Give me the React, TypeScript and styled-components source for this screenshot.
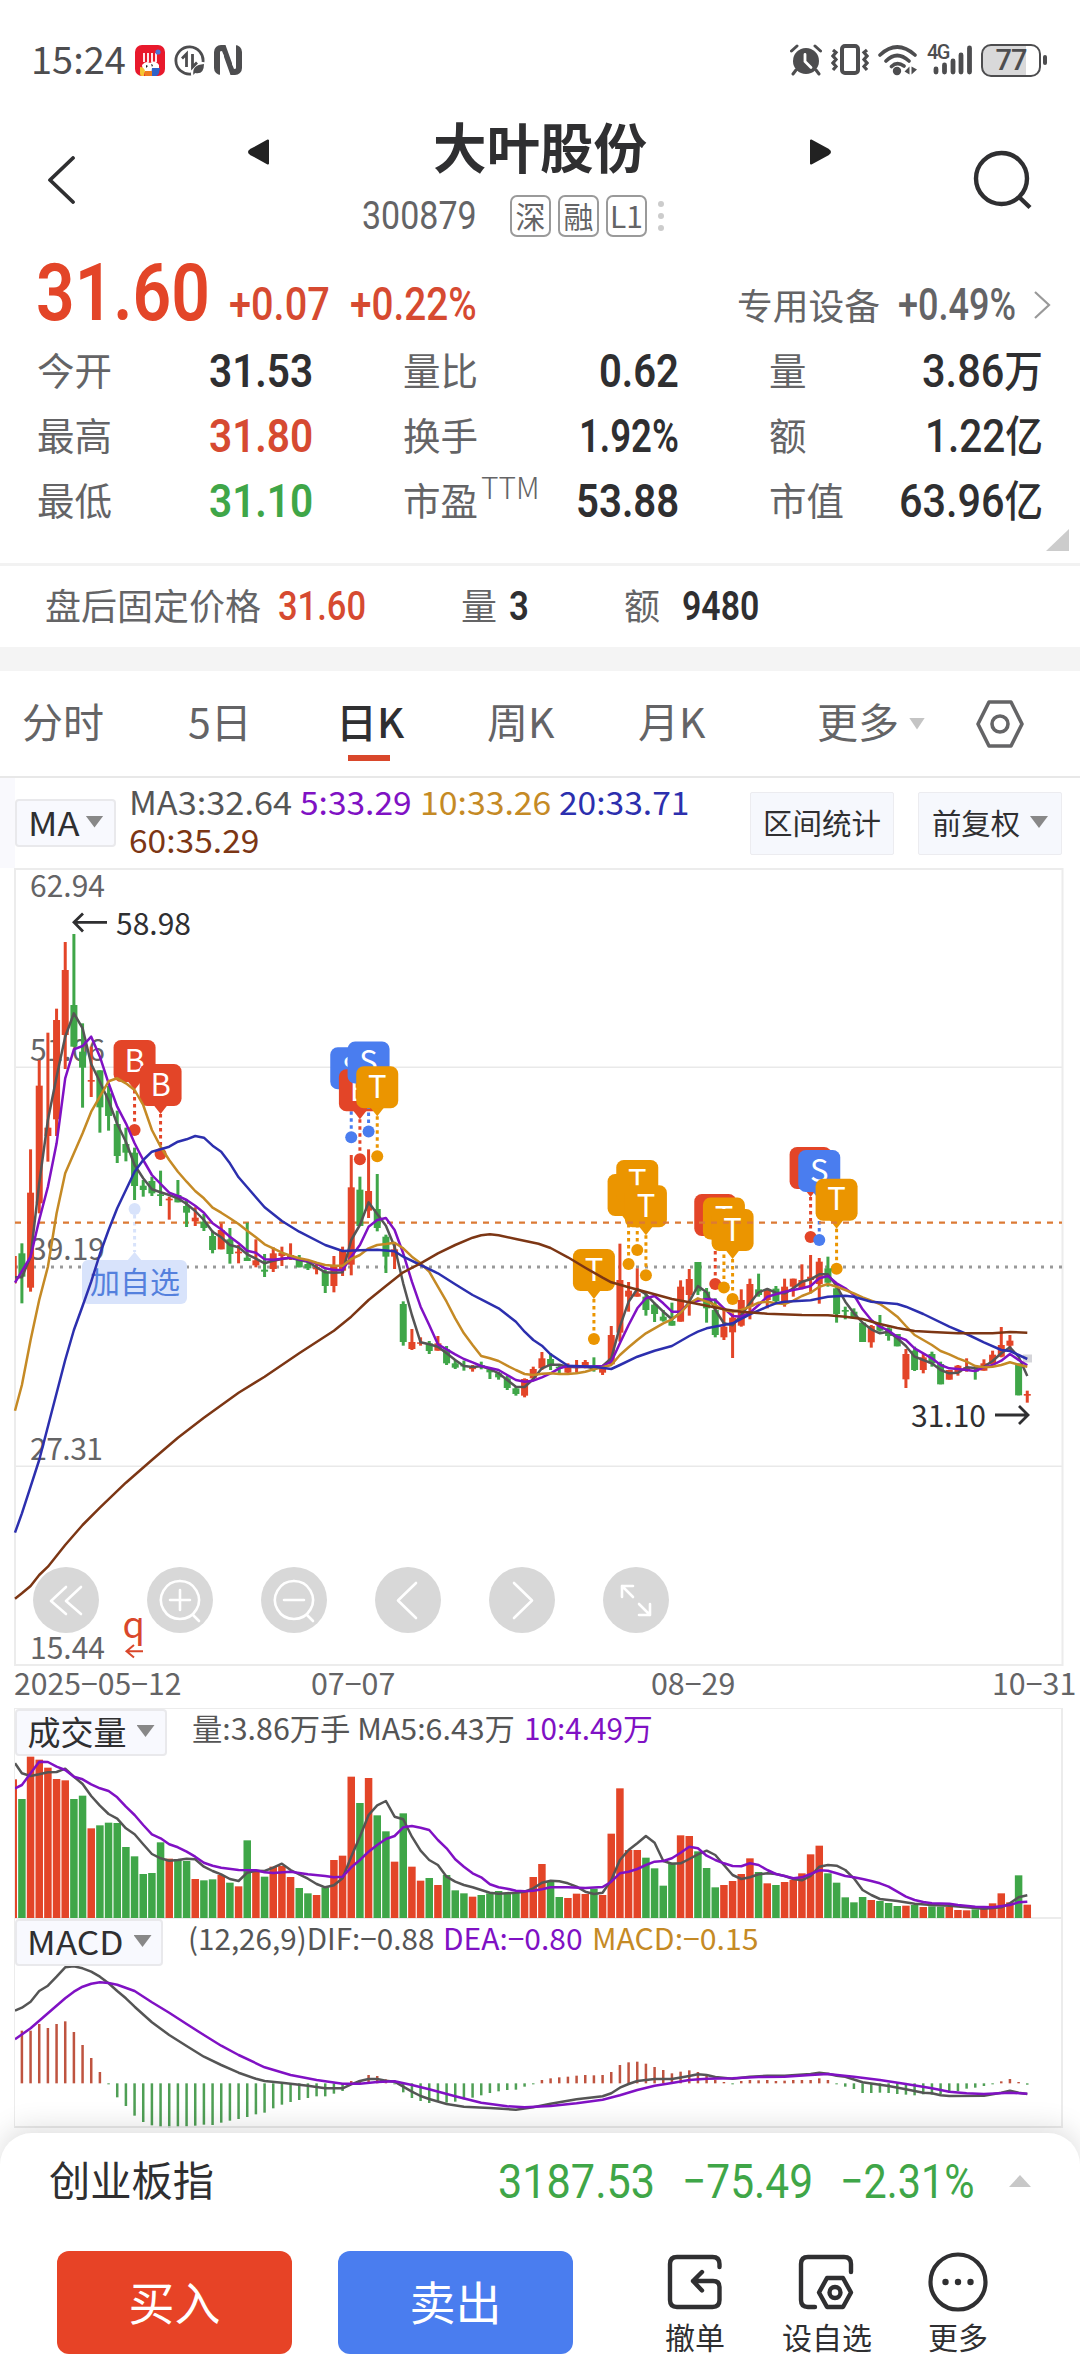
import React, { useLayoutEffect, useRef, useState } from "react";
import styled, { createGlobalStyle, css } from "styled-components";

const RED = "#e34528";
const GREEN = "#3fa648";
const BLUE = "#4a7def";
const ORANGE = "#eb9500";
const INK = "#2f2f31";
const GREY = "#646466";
const CJK = '"Noto Sans CJK SC", "Noto Sans", sans-serif';
const NUM = 'Roboto, "Noto Sans CJK SC", sans-serif';

const Global = createGlobalStyle`
  * { box-sizing: border-box; }
  body { margin: 0; background: #fff; font-family: ${CJK}; color: ${INK}; }
`;

/* ---------- fitted text ---------- */

type TextProps = { $size: number; $color?: string; $weight?: number; $num?: boolean; $lift?: number };

const FitBox = styled.span<TextProps & { $w: number }>`
  display: inline-block;
  flex: none;
  width: ${(p) => p.$w}px;
  padding-bottom: ${(p) => p.$lift || 0}px;
  font-size: ${(p) => p.$size}px;
  line-height: 1;
  text-align: left;
  color: ${(p) => p.$color || INK};
  font-weight: ${(p) => p.$weight || 400};
  font-family: ${(p) => (p.$num ? NUM : CJK)};
  white-space: nowrap;
`;

const FitInner = styled.span`
  display: inline-block;
  transform-origin: 0 50%;
`;

const Unit = styled.span`
  font-size: 0.93em;
`;

type FitProps = {
  w: number;
  size: number;
  color?: string;
  weight?: number;
  num?: boolean;
  lift?: number;
  children: React.ReactNode;
};

function Fit({ w, size, color, weight, num, lift, children }: FitProps) {
  const ref = useRef<HTMLSpanElement>(null);
  const [scale, setScale] = useState(1);
  useLayoutEffect(() => {
    if (ref.current && ref.current.offsetWidth) setScale(w / ref.current.offsetWidth);
  }, [w, size, children]);
  return (
    <FitBox $w={w} $size={size} $color={color} $weight={weight} $num={num} $lift={lift}>
      <FitInner ref={ref} style={{ transform: `scaleX(${scale})` }}>
        {children}
      </FitInner>
    </FitBox>
  );
}

/* ---------- layout ---------- */

const Page = styled.div`
  width: 1080px;
  height: 2376px;
  display: flex;
  flex-direction: column;
  overflow: hidden;
  background: #fff;
`;

const StatusBar = styled.div`
  height: 100px;
  padding: 20px 39px 0 31px;
  display: flex;
  align-items: center;
  justify-content: space-between;
`;

const Cluster = styled.div<{ $gap: number }>`
  display: flex;
  align-items: center;
  gap: ${(p) => p.$gap}px;
`;

const Header = styled.header`
  height: 150px;
  display: grid;
  grid-template-columns: 248px 22px 1fr 22px 248px;
`;

const HeaderSlot = styled.div<{ $top: number; $left?: number }>`
  padding: ${(p) => p.$top}px 0 0 ${(p) => p.$left || 0}px;
  svg { display: block; }
`;

const TitleColumn = styled.div`
  display: flex;
  flex-direction: column;
`;

const TitleLine = styled.div`
  height: 95px;
  display: flex;
  justify-content: center;
  padding-top: 19px;
`;

const CodeLine = styled.div`
  height: 42px;
  padding-left: 92px;
  display: flex;
  align-items: center;
`;

const TagGroup = styled.div`
  display: flex;
  gap: 7px;
  margin: 0 11px 0 33px;
`;

const Tag = styled.span`
  width: 41px;
  height: 42px;
  border: 2px solid #9a9a9a;
  border-radius: 7px;
  display: flex;
  align-items: center;
  justify-content: center;
  font-size: 30px;
  line-height: 36px;
  padding-bottom: 3px;
  color: ${GREY};
`;

const PriceRow = styled.div`
  height: 88px;
  padding: 4px 28px 0 36px;
  display: flex;
  align-items: baseline;
`;

const Gap = styled.span<{ $w: number }>`
  flex: none;
  width: ${(p) => p.$w}px;
`;

const Stats = styled.div`
  position: relative;
  height: 225px;
  padding: 0 37px;
  display: grid;
  grid-template-columns: 276px 276px 274px;
  grid-auto-rows: 65px;
  column-gap: 90px;
`;

const Stat = styled.div`
  display: flex;
  align-items: center;
  justify-content: space-between;
`;

const StatLabel = styled.span`
  font-size: 37.5px;
  line-height: 56px;
  color: ${GREY};
  height: 60px;
  white-space: nowrap;
`;

const Sup = styled.span`
  font-size: 30px;
  font-weight: 300;
  position: relative;
  top: -16px;
  left: 3px;
`;

const Corner = styled.span`
  position: absolute;
  right: 11px;
  bottom: 12px;
  border-left: 23px solid transparent;
  border-bottom: 22px solid #cccccc;
`;

const AfterHours = styled.div`
  height: 84px;
  border-top: 3px solid #f2f2f2;
  padding: 0 46px 0 45px;
  display: flex;
  align-items: center;
`;

const Band = styled.div`
  height: 24px;
  background: #f4f4f4;
`;

const Tabs = styled.nav`
  height: 107px;
  border-bottom: 2px solid #e8e8e8;
  padding: 0 46px 0 22px;
  display: grid;
  grid-template-columns: 166px 148px 151px 151px 179px 92px 23px 1fr;
  align-items: center;
`;

const Tab = styled.span<{ $on?: boolean }>`
  height: 94px;
  font-size: 41px;
  line-height: 87px;
  color: ${(p) => (p.$on ? INK : GREY)};
  ${(p) =>
    p.$on &&
    css`
      font-weight: 500;
      background: linear-gradient(#d9472b, #d9472b) 12px 78px / 42px 6px no-repeat;
    `}
`;

const IndicatorRow = styled.div`
  height: 90px;
  border-left: 15px solid #f9f9fd;
  display: grid;
  grid-template-columns: 101px 13px 621px 144px 24px 144px;
`;

const Dropdown = styled.button<{ $w: number; $h: number; $top?: number; $gap?: number }>`
  width: ${(p) => p.$w}px;
  height: ${(p) => p.$h}px;
  margin: ${(p) => p.$top || 0}px 0 0;
  padding: 0 0 3px;
  display: flex;
  align-items: center;
  justify-content: center;
  gap: ${(p) => p.$gap || 10}px;
  background: #f8f9fe;
  border: 2px solid #e9e9ec;
  border-radius: 4px;
`;

const FlatButton = styled(Dropdown)`
  background: #f6f8fd;
  border: 1px solid #ececf0;
  border-radius: 2px;
`;

const Caret = styled.i<{ $w: number; $h: number; $color: string; $up?: boolean }>`
  flex: none;
  width: ${(p) => p.$w}px;
  height: ${(p) => p.$h}px;
  background: ${(p) => p.$color};
  clip-path: ${(p) =>
    p.$up ? "polygon(50% 0, 100% 100%, 0 100%)" : "polygon(0 0, 100% 0, 50% 100%)"};
`;

const Legend = styled.div`
  display: flex;
  flex-wrap: wrap;
  align-content: flex-start;
  column-gap: 8px;
  padding: 7px 42px 0 0;
  line-height: 1;
  & > span { height: 38px; }
`;

const ChartBox = styled.div`
  position: relative;
  height: 798px;
  svg { display: block; overflow: visible; }
`;

const ChartTools = styled.div`
  position: absolute;
  left: 33px;
  top: 699px;
  display: flex;
  gap: 48px;
`;

const Tool = styled.button`
  width: 66px;
  height: 66px;
  padding: 0;
  border: 0;
  border-radius: 50%;
  background: #d8d8d8;
`;

const Dates = styled.div`
  height: 42px;
  padding: 1px 4px 0 14px;
  display: grid;
  grid-template-columns: 297px 340px 341px 1fr;
`;

const Panel = styled.section<{ $h: number }>`
  height: ${(p) => p.$h}px;
  margin-left: 14px;
  width: 1049px;
  border: 2px solid #ececec;
  border-left-width: 1px;
  border-top-width: 1px;
  border-bottom: 0;
  svg { display: block; }
`;

const PanelHead = styled.div<{ $gap: number }>`
  height: 47px;
  display: flex;
  & > button { margin-right: ${(p) => p.$gap}px; }
`;

const Values = styled.div`
  display: flex;
  gap: 9px;
  padding-top: 4px;
`;

const Sheet = styled.footer`
  position: relative;
  margin-top: 5px;
  height: 243px;
  background: #fff;
  border-radius: 32px 32px 0 0;
  box-shadow: 0 -6px 28px rgba(0, 0, 0, 0.13);
`;

const IndexRow = styled.div`
  height: 96px;
  padding: 0 48px 0 49px;
  display: flex;
  align-items: center;
`;

const Actions = styled.div`
  padding: 22px 0 0 57px;
  display: grid;
  grid-template-columns: 235px 46px 235px 77px 90px 37px 100px 36px 90px;
`;

const Trade = styled.button<{ $bg: string }>`
  height: 103px;
  border: 0;
  border-radius: 12px;
  background: ${(p) => p.$bg};
  color: #fff;
  font: 400 46px/1 ${CJK};
  padding: 0 0 5px;
`;

const Action = styled.div`
  display: flex;
  flex-direction: column;
  align-items: center;
  font-size: 30px;
  line-height: 40px;
  white-space: nowrap;
  svg { display: block; margin-bottom: 3px; }
`;

/* ---------- market data (thirds of a pixel) ---------- */

type Candle = [string, number, number, number, number];

const CANDLE_TEXT = `R1188,1188,1270,1270 G1150,1180,1250,1330 R868,998,1283,1295 R600,677,1030,1060 R518,803,828,905
R446,480,778,828 R246,330,525,627 G222,435,560,560 G490,575,623,743 R560,660,665,711 G631,631,742,818 G678,700,768,812
G752,792,888,909 G803,852,878,904 G863,878,978,1020 G960,977,990,1010 G950,963,1000,1008 G932,1003,1008,1038
R1010,1016,1021,1079 G960,1005,1027,1027 G1018,1038,1058,1101 R1042,1073,1084,1098 G1062,1085,1104,1113
G1112,1128,1170,1180 R1090,1110,1168,1168 G1104,1138,1182,1211 R1155,1175,1180,1210 G1088,1193,1203,1203
R1138,1201,1216,1222 G1182,1229,1235,1251 R1162,1180,1227,1236 R1160,1179,1188,1218 R1150,1185,1195,1200
G1185,1195,1222,1222 G1200,1212,1225,1230 R1212,1222,1228,1243 G1228,1235,1278,1299 R1188,1215,1278,1297
R1160,1172,1232,1248 R885,982,1214,1246 G950,989,1098,1098 R868,993,1052,1074 G942,1047,1104,1114 G1124,1130,1190,1239
R1150,1168,1190,1227 G1324,1332,1446,1457 R1407,1446,1467,1470 R1432,1447,1450,1457 G1443,1450,1473,1482
R1428,1450,1472,1472 G1458,1468,1510,1515 G1500,1510,1523,1527 G1502,1515,1519,1532 R1515,1523,1527,1535
G1505,1515,1519,1528 G1525,1528,1537,1557 G1535,1540,1552,1559 G1548,1555,1584,1590 G1578,1585,1602,1607
R1555,1557,1607,1612 R1520,1527,1555,1560 R1476,1495,1525,1530 G1480,1497,1515,1530 G1512,1520,1525,1542
R1510,1522,1538,1542 R1500,1518,1522,1538 R1500,1506,1520,1525 G1492,1518,1522,1535 R1518,1522,1538,1545
R1398,1425,1513,1515 R1151,1260,1418,1445 R1266,1292,1310,1355 R1225,1300,1310,1310 G1300,1310,1350,1367
G1328,1334,1362,1386 G1350,1370,1382,1385 G1328,1383,1397,1397 R1261,1280,1385,1385 R1227,1257,1305,1367
G1206,1206,1294,1305 G1284,1295,1345,1388 G1315,1350,1425,1432 R1345,1400,1432,1440 R1360,1373,1417,1494
R1288,1320,1397,1400 R1256,1272,1340,1378 G1241,1288,1305,1310 R1285,1292,1320,1345 G1278,1286,1323,1328
R1256,1280,1325,1340 R1256,1256,1280,1310 R1213,1260,1285,1288 R1185,1250,1260,1300 R1194,1205,1272,1331
G1190,1225,1268,1280 G1270,1285,1362,1388 G1340,1350,1355,1378 G1345,1355,1375,1375 G1388,1388,1446,1446
R1395,1398,1447,1463 G1365,1398,1412,1415 G1402,1405,1428,1442 G1422,1422,1459,1459 R1467,1482,1558,1584
G1460,1472,1530,1533 R1480,1492,1530,1540 G1475,1482,1510,1520 G1505,1512,1573,1573 R1530,1530,1559,1559
R1515,1517,1537,1547 R1495,1522,1530,1535 G1515,1530,1535,1559 R1498,1510,1532,1532 R1472,1484,1512,1515
R1401,1455,1490,1492 R1425,1442,1457,1475 G1510,1515,1606,1606 R1592,1602,1607,1628`;

const CANDLES: Candle[] = CANDLE_TEXT.split(/\s+/).map((s) => {
  const n = s.slice(1).split(",").map(Number);
  return [s[0] === "R" ? RED : GREEN, n[0], n[1], n[2], n[3]];
});

const MA3 =
  "0,1252 1,1252 2,1190 3,970 4,780 5,650 6,530 7,460 8,505 9,612 10,665 11,722 12,792 13,845 14,915 15,955 16,988 17,997 18,1005 19,1015 20,1032 21,1053 22,1080 23,1115 24,1132 25,1155 26,1162 27,1183 28,1196 29,1210 30,1202 31,1197 32,1193 33,1200 34,1205 35,1222 36,1237 37,1238 38,1237 39,1140 40,1095 41,1027 42,1062 43,1097 44,1160 45,1270 46,1365 47,1447 48,1453 49,1460 50,1480 51,1500 52,1518 53,1521 54,1519 55,1527 56,1540 57,1560 58,1580 59,1581 60,1557 61,1525 62,1514 63,1514 64,1520 65,1522 66,1520 67,1525 68,1518 69,1495 70,1400 71,1325 72,1287 73,1303 74,1330 75,1355 76,1378 77,1358 78,1325 79,1278 80,1297 81,1350 82,1390 83,1396 84,1365 85,1330 86,1297 87,1287 88,1298 89,1300 90,1285 91,1265 92,1258 93,1243 94,1243 95,1278 96,1325 97,1360 98,1388 99,1408 100,1420 101,1415 102,1435 103,1458 104,1490 105,1500 106,1510 107,1530 108,1540 109,1538 110,1522 111,1524 112,1520 113,1503 114,1480 115,1462 116,1490 117,1548";
const MA5 =
  "0,1268 2,1190 3,1080 4,980 5,850 6,655 7,568 8,558 9,530 10,590 11,670 12,740 13,790 14,850 15,900 16,945 18,998 19,1008 20,1020 21,1037 22,1058 23,1090 24,1108 25,1130 26,1150 27,1172 28,1178 29,1198 30,1199 32,1193 34,1203 35,1210 36,1225 37,1230 38,1230 39,1190 40,1155 41,1100 42,1080 43,1074 44,1110 45,1180 46,1265 47,1340 48,1395 49,1453 50,1468 51,1483 52,1497 53,1507 54,1518 55,1524 56,1530 57,1545 58,1560 59,1565 60,1562 61,1552 62,1540 63,1525 64,1518 66,1520 68,1518 69,1505 70,1450 71,1395 72,1345 73,1315 74,1308 75,1330 76,1355 77,1355 78,1330 79,1322 80,1317 81,1320 82,1345 83,1368 84,1370 85,1358 86,1335 87,1310 88,1303 89,1295 90,1290 91,1285 92,1278 93,1255 94,1248 95,1270 96,1285 97,1305 98,1348 99,1380 100,1400 101,1412 102,1430 103,1440 104,1465 105,1480 106,1495 107,1515 108,1525 109,1527 110,1530 111,1533 112,1522 113,1515 114,1502 115,1482 116,1500 117,1516";
const MA10 =
  "0.2,1652 1,1575 2,1440 3,1320 4,1220 5,1060 6,940 7,880 8,820 9,755 10,710 11,664 12,655 13,670 14,690 15,735 16,810 17,860 18,900 19,935 20,965 21,993 22,1015 23,1043 24,1058 25,1075 26,1092 27,1112 28,1132 29,1153 30,1165 31,1178 32,1187 33,1195 34,1200 35,1208 36,1215 37,1217 38,1217 39,1197 40,1185 41,1165 42,1155 43,1152 44,1148 45,1165 46,1190 47,1210 48,1235 49,1280 50,1325 51,1375 52,1420 53,1455 54,1488 55,1495 56,1503 57,1517 58,1530 59,1542 60,1545 61,1541 62,1540 63,1542 64,1542 65,1540 66,1535 67,1528 68,1522 69,1515 70,1485 71,1462 72,1440 73,1420 74,1405 75,1390 76,1378 77,1358 78,1330 79,1315 80,1325 81,1335 82,1350 83,1355 84,1350 85,1340 86,1328 87,1325 88,1330 89,1332 90,1322 91,1308 92,1298 93,1280 94,1272 95,1280 96,1290 97,1300 98,1312 99,1322 100,1332 101,1350 102,1370 103,1398 104,1425 105,1440 106,1455 107,1473 108,1483 109,1495 110,1505 111,1518 112,1522 113,1520 114,1515 115,1507 116,1514 117,1520";
const MA20 =
  "0.2,2018 1,1960 2,1880 3,1800 4.5,1650 6,1500 7,1410 8,1338 9,1265 10,1182 11,1110 12,1045 13,990 14,935 15,900 16,875 17,868 18,860 19,845 20,838 21,828 22,833 23,857 24,875 25,910 26,952 29,1042 31,1083 33,1115 36,1155 38,1173 40,1171 42,1169 44,1174 45,1190 47,1215 49,1240 51,1273 53,1305 54,1318 56,1345 58,1385 59,1415 60,1440 61,1457 62,1483 64,1517 67,1520 69,1527 70,1515 72,1490 74,1472 76,1458 78,1428 79,1415 80,1405 83,1390 85,1363 87,1340 88,1330 89,1325 92,1321 94,1310 96,1307 97,1310 99,1325 102,1332 103,1340 105,1362 108,1400 110,1422 112,1447 114,1470 115,1473 116,1485 117,1497";
const MA60 =
  "0.2,2216 1,2200 2,2178 3,2145 4,2120 6,2055 8,1995 10,1943 13,1868 16,1800 19,1733 22,1673 26,1598 29,1550 33,1480 37,1412 39,1370 41,1320 43,1278 45,1237 47,1210 49,1180 51,1155 53,1133 54,1126 55,1123 56,1126 58,1137 60.6,1151 62,1164 64,1192 66,1223 68,1253 69,1267 71,1282 74,1303 76,1317 78,1327 80,1337 82,1348 84,1355 87,1361 91,1365 94,1366 96,1370 98,1377 100,1392 102,1404 104,1413 106,1416 109,1420 113,1420 115,1416 117,1418";

const VOLUME = [
  268, 327, 200, 209, 233, 267, 271, 327, 317, 415, 406, 398, 399, 471, 499, 552, 549, 457, 506, 510, 513, 567,
  571, 568, 555, 578, 589, 451, 540, 560, 530, 528, 561, 594, 610, 615, 592, 510, 497, 260, 339, 264, 376, 424,
  515, 370, 530, 572, 564, 585, 555, 601, 610, 620, 615, 610, 603, 612, 607, 600, 561, 522, 573, 621, 624, 611,
  612, 596, 615, 431, 295, 480, 480, 503, 535, 587, 518, 436, 438, 484, 534, 592, 585, 573, 552, 505, 546, 580,
  585, 576, 570, 550, 493, 467, 550, 578, 622, 637, 621, 630, 633, 639, 648, 647, 645, 651, 649, 650, 651, 660,
  661, 658, 655, 640, 610, 637, 556, 644,
];
const VMA5 =
  "0.2,220 1,250 2,258 3,253 4,247 5,246 6,236 7,260 8,282 9,318 10,347 11,372 12,386 13,415 14,433 15,463 16,492 17,505 18,512 19,510 20,506 21,508 22,530 23,543 24,553 25,567 26,573 27,548 28,542 29,543 30,533 31,521 32,540 33,553 34,566 35,582 36,592 37,586 38,565 39,500 40,440 41,375 42,346 43,333 44,380 45,388 46,440 47,482 48,510 49,525 50,560 51,575 52,585 53,592 54,600 55,608 56,611 58,608 59,605 60,595 61,578 62,572 63,574 64,580 65,590 66,605 67,612 68,608 69,570 70,510 71,480 72,460 73,438 74,458 75,513 76,521 77,520 78,507 79,493 80,482 81,495 82,525 83,555 84,567 85,562 86,553 87,550 88,552 89,558 90,567 91,571 92,558 93,530 94,525 95,527 96,540 97,565 98,600 99,615 100,627 102,633 104,641 106,645 108,647 110,652 112,656 114,652 115,640 116,622 117,616";
const VMA10 =
  "0.2,295 1,285 2,250 3,215 4,216 5,230 6,240 7,260 8,268 9,283 10,295 11,303 12,322 13,350 14,375 15,405 16,433 17,445 18,463 19,472 20,485 21,500 22,518 23,527 24,533 26,540 28,541 29,547 30,549 32,545 34,553 36,558 37,562 38,560 39,532 40,510 41,485 42,465 43,447 44,438 45,412 46,408 47,413 48,420 49,450 50,475 51,508 52,530 53,550 54,562 55,583 56,592 57,596 58,602 59,604 60,602 61,598 62,592 64,592 66,594 68,591 69,575 70,550 71,545 72,537 73,525 74,515 75,513 76,505 77,488 78,470 79,475 80,497 81,510 82,520 83,528 84,529 85,520 86,525 87,540 88,552 89,558 90,565 91,562 92,552 93,541 94,542 95,550 96,558 97,562 98,567 99,573 100,580 101,590 102,605 103,620 104,630 105,636 106,640 108,641 109,645 111,650 113,652 115,645 116,637 117,635";

const HIST = [
  0, 1022, 1022, 1002, 1014, 1002, 994, 1026, 1065, 1104, 1146, 1183, 1222, 1248, 1277, 1296, 1306, 1311, 1313,
  1311, 1310, 1307, 1304, 1305, 1298, 1292, 1287, 1281, 1273, 1268, 1255, 1244, 1236, 1230, 1224, 1219, 1219, 1211,
  1203, 1173, 1170, 1155, 1158, 1168, 1182, 1207, 1224, 1233, 1239, 1235, 1238, 1235, 1228, 1223, 1216, 1209, 1204,
  1200, 1199, 1190, 1182, 1170, 1165, 1162, 1160, 1157, 1155, 1156, 1155, 1146, 1125, 1117, 1115, 1121, 1131, 1140,
  1150, 1145, 1141, 1146, 1158, 1170, 1176, 1183, 1173, 1170, 1171, 1170, 1173, 1172, 1170, 1170, 1170, 1165, 1170,
  1183, 1190, 1197, 1209, 1209, 1208, 1209, 1212, 1214, 1216, 1213, 1214, 1213, 1208, 1203, 1196, 1193, 1188, 1183,
  1174, 1167, 1176, 1184,
];
const DIF =
  "0.2,962 1,953 2,935 3,903 4,887 5,860 6,832 7,829 8,835 9,845 10,860 11,880 12,903 13,925 14,950 16,997 18,1035 20,1068 22,1100 24,1125 26,1148 28,1166 29,1173 31,1178 34,1187 36,1195 38,1195 39,1183 40,1173 41,1167 42,1167 43,1172 44,1175 45,1190 46,1205 47,1218 48,1227 50,1242 52,1250 55,1254 58,1259 60,1252 62,1241 65,1228 68,1219 69,1210 70,1193 71,1182 72,1173 74,1167 76,1167 78,1158 79,1153 80,1155 81,1161 83,1166 85,1160 87,1157 89,1157 92,1152 93,1148 94,1151 95,1157 96,1160 98,1177 101,1188 103,1198 105,1208 106,1210 107,1216 108,1218 112,1217 114,1208 115,1202 116,1208 117,1212";
const DEA =
  "0.2,1048 2,1015 4,970 6,925 7,905 8,890 9,881 10,877 11,879 12,884 14,903 16,937 18,968 20,1002 22,1035 24,1067 26,1095 29,1132 32,1155 35,1170 38,1181 40,1181 42,1176 44,1174 46,1185 48,1198 51,1219 54,1238 57,1249 59,1252 62,1248 65,1240 68,1229 70,1216 72,1200 74,1187 76,1179 78,1170 80,1166 83,1165 86,1161 89,1160 92,1155 94,1152 97,1160 100,1170 103,1182 106,1195 108,1205 110,1210 112,1212 115,1208 117,1211";

const PURPLE = "#8011c4";
const GOLD = "#c58a25";
const NAVY = "#2c2fae";
const BROWN = "#7c3614";
const LINE_GREY = "#555555";

const xAt = (i: number) => 13.23 + 8.667 * i;
const toPoints = (text: string, base: number) =>
  text
    .split(" ")
    .map((p) => {
      const [i, v] = p.split(",").map(Number);
      return `${Math.max(xAt(i), 15).toFixed(1)},${(base + v / 3).toFixed(1)}`;
    })
    .join(" ");

function Curve({ data, base, color }: { data: string; base: number; color: string }) {
  return (
    <polyline points={toPoints(data, base)} fill="none" stroke={color} strokeWidth={2.5} strokeLinejoin="round" />
  );
}

const MARKS: [number, string, number][] = [
  [14, "B", 1130],
  [17, "B", 1154],
  [39, "S", 1137.3],
  [40, "B", 1159.3],
  [41, "S", 1131.5],
  [42, "T", 1156.3],
  [67, "T", 1339],
  [71, "T", 1264],
  [72, "T", 1250],
  [73, "T", 1275.3],
  [81, "B", 1284],
  [82, "T", 1287.5],
  [83, "T", 1299],
  [92, "B", 1237],
  [93, "S", 1240],
  [95, "T", 1268.7],
];
const MARK_COLOR: Record<string, string> = { B: RED, S: BLUE, T: ORANGE };

function Mark({ i, kind, y }: { i: number; kind: string; y: number }) {
  const x = xAt(i);
  const top = y - 90;
  const c = MARK_COLOR[kind];
  return (
    <g>
      <line x1={x} x2={x} y1={top + 50} y2={y} stroke={c} strokeWidth={3} strokeDasharray="3.5 3.5" />
      <circle cx={x} cy={y} r={6} fill={c} />
      <path d={`M${x - 7} ${top + 41}L${x} ${top + 50}L${x + 7} ${top + 41}Z`} fill={c} />
      <rect x={x - 21} y={top} width={42} height={42} rx={7.5} fill={c} />
      <text x={x} y={top + 31.5} fontSize={31} fill="#fff" textAnchor="middle" fontFamily={CJK}>
        {kind}
      </text>
    </g>
  );
}

function PriceChart() {
  const label = { fontSize: 30, fill: GREY, fontFamily: CJK };
  return (
    <svg width={1080} height={798} viewBox="0 868 1080 798">
      <path d="M15 1067.3H1062M15 1466.3H1062" stroke="#e9e9e9" strokeWidth={1.5} />
      <path d="M15 869H1062.5V1665H15Z" fill="none" stroke="#ececec" strokeWidth={2} />
      <g {...label}>
        <text x={30} y={896.5} textLength={75}>62.94</text>
        <text x={30} y={1061} textLength={75}>51.06</text>
        <text x={30} y={1260} textLength={75}>39.19</text>
        <text x={30} y={1460} textLength={73}>27.31</text>
        <text x={30} y={1659} textLength={75}>15.44</text>
      </g>
      <line x1={15} x2={1062} y1={1267} y2={1267} stroke="#999" strokeWidth={3} strokeDasharray="3 6" />
      <line x1={134.6} x2={134.6} y1={1215} y2={1252} stroke="#d8e3fb" strokeWidth={3} strokeDasharray="3.5 3.5" />
      <circle cx={134.6} cy={1209} r={6} fill="#d8e3fb" />
      <path d="M127 1261L134.6 1252L142 1261Z" fill="#d8e3fb" />
      <rect x={82} y={1260} width={105} height={44} rx={6} fill="#d8e3fb" />
      <text x={90} y={1292.5} fontSize={30} textLength={90} fill="#5480dd" fontFamily={CJK}>
        加自选
      </text>
      {MARKS.map(([i, k, y]) => (
        <Mark key={i} i={i} kind={k} y={y} />
      ))}
      <line x1={15} x2={1062} y1={1222.6} y2={1222.6} stroke="#dc7a35" strokeWidth={2.2} strokeDasharray="6 6" />
      {CANDLES.map(([c, h, a, b, l], i) => {
        const x = xAt(i);
        const left = Math.max(x - 3.5, 15);
        return (
          <g key={i} fill={c}>
            <rect x={Math.max(x - 1.5, 15)} y={860 + h / 3} width={i ? 3 : 1} height={(l - h) / 3} />
            <rect x={left} y={860 + a / 3} width={x + 3.5 - left} height={Math.max((b - a) / 3, 1.5)} />
          </g>
        );
      })}
      <rect x={1023} y={1354.5} width={9} height={8} fill="#c9c9d0" opacity={0.8} />
      <Curve data={MA3} base={860} color={LINE_GREY} />
      <Curve data={MA5} base={860} color={PURPLE} />
      <Curve data={MA10} base={860} color={GOLD} />
      <Curve data={MA20} base={860} color={NAVY} />
      <Curve data={MA60} base={860} color={BROWN} />
      <g stroke={INK} strokeWidth={2.8} fill="none">
        <path d="M107 922.3H74.5M83 913.5L74 922.3L83 931.5" />
        <path d="M995 1415H1027.5M1019 1406L1028 1415L1019 1424" />
      </g>
      <g fontSize={30} fill={INK} fontFamily={CJK}>
        <text x={116} y={934.5} textLength={75}>58.98</text>
        <text x={911} y={1426.5} textLength={75}>31.10</text>
      </g>
      <text x={122.5} y={1638} fontSize={36} fill="#d9472b" fontFamily={CJK}>q</text>
      <path d="M143 1651.3H126.5M134 1645L126.5 1651.3L134 1657.5" stroke="#d9472b" strokeWidth={2} fill="none" />
    </svg>
  );
}

function VolumeChart() {
  return (
    <svg width={1046} height={162} viewBox="15 1756 1046 162">
      <line x1={15} x2={1062} y1={1917.6} y2={1917.6} stroke="#ececec" strokeWidth={1.2} />
      {VOLUME.map((v, i) => (
        <rect
          key={i}
          x={xAt(i) - 3.75}
          y={1690 + v / 3}
          width={7.5}
          height={(684 - v) / 3}
          fill={CANDLES[i][0]}
        />
      ))}
      <Curve data={VMA5} base={1690} color={LINE_GREY} />
      <Curve data={VMA10} base={1690} color={PURPLE} />
    </svg>
  );
}

function MacdChart() {
  return (
    <svg width={1046} height={162} viewBox="15 1966 1046 162">
      {HIST.map((v, i) => {
        if (!v) return null;
        const up = v < 1180;
        return (
          <rect
            key={i}
            x={xAt(i) - 1.25}
            y={1690 + Math.min(v, 1180) / 3}
            width={2.5}
            height={Math.max(Math.abs(v - 1180) / 3, 1)}
            fill={up ? "#bf5440" : "#4f9f55"}
          />
        );
      })}
      <Curve data={DIF} base={1690} color={LINE_GREY} />
      <Curve data={DEA} base={1690} color={PURPLE} />
      <line x1={15} x2={1062} y1={2127} y2={2127} stroke="#e3e3e3" strokeWidth={1.4} />
    </svg>
  );
}

/* ---------- icons ---------- */

const AppBadge = () => (
  <svg width={30} height={31} viewBox="0 0 30 31">
    <rect width={30} height={31} rx={7} fill="#e8192c" />
    <path d="M9 8v9M13 8v9M17 8v9M21 8v9" stroke="#fff" strokeWidth={1.8} />
    <path d="M7 20Q11 15 15 18Q20 14 24 20L24 27H8Z" fill="#fff" />
    <path d="M5 22Q9 22 10 26L9 31H7Q5 31 5 28Z" fill="#f5c531" />
    <path d="M17 23H25L24 28Q23 31 21 31H16Z" fill="#2f63c9" />
    <path d="M10 26H17V31H10Z" fill="#ef7b1f" />
    <circle cx={23} cy={7} r={2.6} fill="#4a74d8" />
    <path d="M11 20l2 1-2 2zM16 19l2 1-1 2z" fill="#222" />
  </svg>
);

const DataSaver = () => (
  <svg width={31} height={31} viewBox="0 0 31 31" fill="none" stroke="#4d4d4f" strokeWidth={2.8}>
    <path d="M17 29A13.6 13.6 0 1 1 29 17" />
    <path d="M8 13.500L12.500 9V22M23 17.500L18.500 22V9" strokeWidth={2.8} />
    <path d="M19.5 30Q17.5 20 30 19Q30 30 21 28Z" fill="#4d4d4f" stroke="none" />
  </svg>
);

const Nfc = () => (
  <svg width={28} height={30} viewBox="0 0 28 30">
    <rect width={28} height={30} rx={7} fill="#4d4d4f" />
    <path d="M6 30V6.500L8 6L10 11V30ZM22 0V23.500L20 24L18 19V0Z" fill="#fff" />
    <path d="M9 9L16.500 30H9ZM19 21L11.500 0H19Z" fill="#fff" />
  </svg>
);

const Alarm = () => (
  <svg width={32} height={32} viewBox="0 0 32 32" stroke="#4d4d4f" fill="none" strokeLinecap="round">
    <circle cx={16} cy={17} r={13} fill="#4d4d4f" stroke="none" />
    <path d="M1.5 7L7 2M30.500 7L25 2M6 26L3 30M26 26L29 30" strokeWidth={3} />
    <path d="M15 10.500V17.500L21 23.500" stroke="#fff" strokeWidth={2.8} />
  </svg>
);

const Vibrate = () => (
  <svg width={38} height={32} viewBox="0 0 38 32" stroke="#4d4d4f" fill="none">
    <rect x={11} y={2} width={16} height={27} rx={3} strokeWidth={4} />
    <path d="M2 6L5 8.500L2 12L5 15.500L2 19L5 22.500L2 26M36 6L33 8.500L36 12L33 15.500L36 19L33 22.500L36 26" strokeWidth={3.200} />
  </svg>
);

const Wifi = () => (
  <svg width={40} height={32} viewBox="0 0 40 32" stroke="#4d4d4f" fill="none" strokeWidth={3.6} strokeLinecap="round">
    <path d="M2 11Q19 -5 37 11M8 17Q19 6 31 17M13.500 22.500Q19 17 26 22" />
    <circle cx={19} cy={27} r={4.200} fill="#4d4d4f" stroke="none" />
    <path d="M31.500 22.500V30.500L26.500 27.500ZM33.500 22.500V30.500L39 25.500Z" fill="#4d4d4f" stroke="none" />
  </svg>
);

const SignalBox = styled.div`
  width: 45px;
  height: 32px;
  position: relative;
  font: 500 20px/16px Roboto, sans-serif;
  letter-spacing: -1.5px;
  color: #4d4d4f;
  svg { position: absolute; left: 0; top: 0; }
`;

const Battery = styled.div`
  width: 60px;
  height: 33px;
  border: 2.500px solid #4d4d4f;
  border-radius: 10px;
  background: linear-gradient(90deg, #d9d9da 77%, #fff 77%);
  font: 500 29px/29px Roboto, sans-serif;
  letter-spacing: -1px;
  color: #4d4d4f;
  text-align: center;
  position: relative;
  &::after {
    content: "";
    position: absolute;
    right: -8px;
    top: 9px;
    width: 4px;
    height: 10px;
    border-radius: 2px;
    background: #4d4d4f;
  }
`;

const TOOL_ICONS = [
  "M33 20L18 34L33 47M48 20L33 34L48 47",
  "M33 14A19 19 0 1 1 32.900 14M46 48L52 54M23 33H43M33 23V43",
  "M33 14A19 19 0 1 1 32.900 14M46 48L52 54M23 33H43",
  "M41 16L23 33.500L41 51",
  "M25 16L43 33.500L25 51",
  "M19 30V19H30M19 19L30 30M36 48H47V37M47 48L36 37",
];

export default function App() {
  return (
    <Page>
      <Global />
      <StatusBar>
        <Cluster $gap={9}>
          <Fit w={95} size={38} color="#4d4d4f" lift={4}>15:24</Fit>
          <AppBadge />
          <DataSaver />
          <Nfc />
        </Cluster>
        <Cluster $gap={9}>
          <Alarm />
          <Vibrate />
          <Wifi />
          <SignalBox>
            4G
            <svg width={45} height={32} viewBox="0 0 45 32" stroke="#4d4d4f" strokeWidth={4.800} strokeLinecap="round">
              <path d="M9 25V28M17.500 21V28M26 17V28M34 11V28M42.500 4V28" />
            </svg>
          </SignalBox>
          <Battery>77</Battery>
        </Cluster>
      </StatusBar>

      <Header>
        <HeaderSlot $top={56} $left={47}>
          <svg width={30} height={48} viewBox="0 0 30 48" fill="none" stroke={INK} strokeWidth={3.800} strokeLinecap="round" strokeLinejoin="round">
            <path d="M26 2L3 24L26 46" />
          </svg>
        </HeaderSlot>
        <HeaderSlot $top={39}>
          <svg width={22} height={26} viewBox="0 0 22 26">
            <path d="M20 1.500V24.500L2.500 15Q-.500 13 2.500 11Z" fill="#222" stroke="#222" strokeWidth={2} strokeLinejoin="round" />
          </svg>
        </HeaderSlot>
        <TitleColumn>
          <TitleLine>
            <Fit w={214} size={54} weight={700}>大叶股份</Fit>
          </TitleLine>
          <CodeLine>
            <Fit w={115} size={39} num color={GREY}>300879</Fit>
            <TagGroup>
              <Tag>深</Tag>
              <Tag>融</Tag>
              <Tag>L1</Tag>
            </TagGroup>
            <svg width={6} height={32} viewBox="0 0 6 32" fill="#ccc">
              <circle cx={3} cy={4} r={3} />
              <circle cx={3} cy={16} r={3} />
              <circle cx={3} cy={28} r={3} />
            </svg>
          </CodeLine>
        </TitleColumn>
        <HeaderSlot $top={39}>
          <svg width={22} height={26} viewBox="0 0 22 26">
            <path d="M1 1.500V24.500L18.500 15Q21.500 13 18.500 11Z" fill="#222" stroke="#222" strokeWidth={2} strokeLinejoin="round" />
          </svg>
        </HeaderSlot>
        <HeaderSlot $top={50} $left={141}>
          <svg width={62} height={60} viewBox="0 0 62 60" fill="none" stroke={INK} strokeWidth={4.400}>
            <circle cx={28.500} cy={28.500} r={25.500} />
            <path d="M46 47L57 57.500" />
          </svg>
        </HeaderSlot>
      </Header>

      <PriceRow>
        <Fit w={174} size={79} num weight={600} color={RED}>31.60</Fit>
        <Gap $w={19} />
        <Fit w={101} size={46} num weight={500} color="#d64a31">+0.07</Fit>
        <Gap $w={20} />
        <Fit w={127} size={46} num weight={500} color="#d64a31">+0.22%</Fit>
        <Gap $w={260} />
        <Fit w={143} size={36} color={GREY}>专用设备</Fit>
        <Gap $w={18} />
        <Fit w={118} size={44} num weight={500} color={GREY}>+0.49%</Fit>
        <Gap $w={17} />
        <svg width={18} height={30} viewBox="0 0 18 30" fill="none" stroke="#999" strokeWidth={2.200}>
          <path d="M2 2L16 15L2 28" />
        </svg>
      </PriceRow>

      <Stats>
        <Stat><StatLabel>今开</StatLabel><Fit w={104} size={46} num weight={600}>31.53</Fit></Stat>
        <Stat><StatLabel>量比</StatLabel><Fit w={80} size={46} num weight={600}>0.62</Fit></Stat>
        <Stat><StatLabel>量</StatLabel><Fit w={121} size={46} num weight={500}>3.86<Unit>万</Unit></Fit></Stat>
        <Stat><StatLabel>最高</StatLabel><Fit w={104} size={46} num weight={600} color="#d64a31">31.80</Fit></Stat>
        <Stat><StatLabel>换手</StatLabel><Fit w={100} size={46} num weight={600}>1.92%</Fit></Stat>
        <Stat><StatLabel>额</StatLabel><Fit w={118} size={46} num weight={500}>1.22<Unit>亿</Unit></Fit></Stat>
        <Stat><StatLabel>最低</StatLabel><Fit w={104} size={46} num weight={600} color={GREEN}>31.10</Fit></Stat>
        <Stat><StatLabel>市盈<Sup>TTM</Sup></StatLabel><Fit w={103} size={46} num weight={600}>53.88</Fit></Stat>
        <Stat><StatLabel>市值</StatLabel><Fit w={144} size={46} num weight={500}>63.96<Unit>亿</Unit></Fit></Stat>
        <Corner />
      </Stats>

      <AfterHours>
        <Fit w={216} size={36} color={GREY} lift={5}>盘后固定价格</Fit>
        <Gap $w={17} />
        <Fit w={88} size={40} num weight={500} color="#d64a31">31.60</Fit>
        <Gap $w={95} />
        <Fit w={36} size={36} color={GREY} lift={5}>量</Fit>
        <Gap $w={12} />
        <Fit w={20} size={40} num weight={600}>3</Fit>
        <Gap $w={95} />
        <Fit w={36} size={36} color={GREY} lift={5}>额</Fit>
        <Gap $w={22} />
        <Fit w={77} size={40} num weight={600}>9480</Fit>
      </AfterHours>
      <Band />

      <Tabs>
        <Tab>分时</Tab>
        <Tab>5日</Tab>
        <Tab $on>日K</Tab>
        <Tab>周K</Tab>
        <Tab>月K</Tab>
        <Tab>更多</Tab>
        <Caret $w={16} $h={12} $color="#c4c4c4" />
        <svg width={92} height={48} viewBox="-44 0 92 48" fill="none" stroke={GREY} strokeWidth={3.600} strokeLinejoin="round">
          <path d="M13 2H35L46 24L35 46H13L2 24Z" />
          <circle cx={24} cy={24} r={8} />
        </svg>
      </Tabs>

      <IndicatorRow>
        <Dropdown $w={101} $h={48} $top={21} $gap={7}>
          <Fit w={51} size={32}>MA</Fit>
          <Caret $w={18} $h={12} $color="#888" />
        </Dropdown>
        <span />
        <Legend>
          <Fit w={163} size={32} color={LINE_GREY}>MA3:32.64</Fit>
          <Fit w={112} size={32} color={PURPLE}>5:33.29</Fit>
          <Fit w={131} size={32} color={GOLD}>10:33.26</Fit>
          <Fit w={130} size={32} color={NAVY}>20:33.71</Fit>
          <Fit w={130} size={32} color={BROWN}>60:35.29</Fit>
        </Legend>
        <FlatButton $w={144} $h={63} $top={14}>
          <Fit w={118} size={29}>区间统计</Fit>
        </FlatButton>
        <span />
        <FlatButton $w={144} $h={63} $top={14}>
          <Fit w={88} size={29}>前复权</Fit>
          <Caret $w={18} $h={12} $color="#888" />
        </FlatButton>
      </IndicatorRow>

      <ChartBox>
        <PriceChart />
        <ChartTools>
          {TOOL_ICONS.map((d, i) => (
            <Tool key={i}>
              <svg width={66} height={66} viewBox="0 0 66 66" fill="none" stroke="#fff" strokeWidth={2.600} strokeLinecap="round" strokeLinejoin="round">
                <path d={d} />
              </svg>
            </Tool>
          ))}
        </ChartTools>
      </ChartBox>

      <Dates>
        <Fit w={168} size={30} color={GREY}>2025−05−12</Fit>
        <Fit w={84} size={30} color={GREY}>07−07</Fit>
        <Fit w={84} size={30} color={GREY}>08−29</Fit>
        <Fit w={84} size={30} color={GREY}>10−31</Fit>
      </Dates>

      <Panel $h={210}>
        <PanelHead $gap={25}>
          <Dropdown $w={152} $h={47}>
            <Fit w={99} size={33}>成交量</Fit>
            <Caret $w={18} $h={12} $color="#888" />
          </Dropdown>
          <Values>
            <Fit w={323} size={29.500} color={LINE_GREY}>量:3.86万手 MA5:6.43万</Fit>
            <Fit w={129} size={29.500} color={PURPLE}>10:4.49万</Fit>
          </Values>
        </PanelHead>
        <VolumeChart />
      </Panel>
      <Panel $h={210}>
        <PanelHead $gap={25}>
          <Dropdown $w={148} $h={47}>
            <Fit w={97} size={32}>MACD</Fit>
            <Caret $w={18} $h={12} $color="#888" />
          </Dropdown>
          <Values>
            <Fit w={246} size={29.500} color={LINE_GREY}>(12,26,9)DIF:−0.88</Fit>
            <Fit w={140} size={29.500} color={PURPLE}>DEA:−0.80</Fit>
            <Fit w={167} size={29.500} color={GOLD}>MACD:−0.15</Fit>
          </Values>
        </PanelHead>
        <MacdChart />
      </Panel>

      <Sheet>
        <IndexRow>
          <Fit w={165} size={41} lift={5}>创业板指</Fit>
          <Gap $w={284} />
          <Fit w={157} size={49} num color={GREEN}>3187.53</Fit>
          <Gap $w={27} />
          <Fit w={131} size={49} num color={GREEN}>−75.49</Fit>
          <Gap $w={27} />
          <Fit w={134} size={49} num color={GREEN}>−2.31%</Fit>
          <Gap $w={35} />
          <Caret $w={22} $h={12} $color="#c8c8c8" $up />
        </IndexRow>
        <Actions>
          <Trade $bg="#e74326">买入</Trade>
          <span />
          <Trade $bg={BLUE}>卖出</Trade>
          <span />
          <Action>
            <svg width={60} height={62} viewBox="665 2251 60 62" fill="none" stroke={INK} strokeWidth={4.400} strokeLinecap="round" strokeLinejoin="round">
              <path d="M719.500 2267V2264Q719.500 2257 712.500 2257H677Q670 2257 670 2264V2300Q670 2307 677 2307H712.500Q719.500 2307 719.500 2300V2287Q719.500 2281 713 2281H693M702 2272L693 2281L702 2290.500" />
            </svg>
            撤单
          </Action>
          <span />
          <Action>
            <svg width={60} height={62} viewBox="797 2251 60 62" fill="none" stroke={INK} strokeWidth={4.400} strokeLinecap="round" strokeLinejoin="round">
              <path d="M851 2272V2264Q851 2257 844 2257H808Q801 2257 801 2264V2300Q801 2307 808 2307H815" />
              <path d="M827 2278H843L851 2292.500L843 2307H827L819 2292.500Z" />
              <circle cx={835} cy={2292.500} r={5.500} />
            </svg>
            设自选
          </Action>
          <span />
          <Action>
            <svg width={60} height={62} viewBox="928 2251 60 62" fill="none" stroke={INK} strokeWidth={4.200}>
              <circle cx={958} cy={2282} r={27.500} />
              <g fill={INK} stroke="none">
                <circle cx={945.500} cy={2282} r={3.200} />
                <circle cx={958} cy={2282} r={3.200} />
                <circle cx={970.500} cy={2282} r={3.200} />
              </g>
            </svg>
            更多
          </Action>
        </Actions>
      </Sheet>
    </Page>
  );
}
